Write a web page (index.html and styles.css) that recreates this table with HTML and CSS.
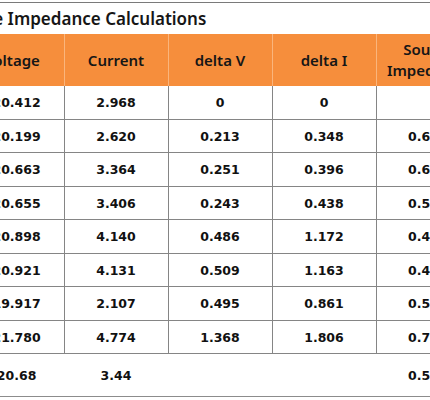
FILE: index.html
```html
<!DOCTYPE html>
<html lang="en">
<head>
  <meta charset="UTF-8">
  <meta name="viewport" content="width=device-width, initial-scale=1.0">
  <title>Source Impedance Calculations</title>
  <link rel="stylesheet" href="styles.css">
</head>
<body>
  <div class="panel">
    <h1 class="panel-title">Source Impedance Calculations</h1>

    <table class="calc">
      <thead>
        <tr>
          <th>Voltage</th>
          <th>Current</th>
          <th>delta V</th>
          <th>delta I</th>
          <th>Source<br>Impedance</th>
        </tr>
      </thead>
      <tbody>
        <tr><td>120.412</td><td>2.968</td><td>0</td><td>0</td><td></td></tr>
        <tr><td>120.199</td><td>2.620</td><td>0.213</td><td>0.348</td><td>0.612</td></tr>
        <tr><td>120.663</td><td>3.364</td><td>0.251</td><td>0.396</td><td>0.634</td></tr>
        <tr><td>120.655</td><td>3.406</td><td>0.243</td><td>0.438</td><td>0.555</td></tr>
        <tr><td>120.898</td><td>4.140</td><td>0.486</td><td>1.172</td><td>0.415</td></tr>
        <tr><td>120.921</td><td>4.131</td><td>0.509</td><td>1.163</td><td>0.438</td></tr>
        <tr><td>119.917</td><td>2.107</td><td>0.495</td><td>0.861</td><td>0.575</td></tr>
        <tr><td>121.780</td><td>4.774</td><td>1.368</td><td>1.806</td><td>0.757</td></tr>
      </tbody>
      <tfoot>
        <tr><td>120.68</td><td>3.44</td><td></td><td></td><td>0.569</td></tr>
      </tfoot>
    </table>
  </div>
</body>
</html>
```

FILE: styles.css
```css
:root {
  --laranja: #f68e3c;
  --laranja-claro: #fab57c;
  --linha: #858585;
  --texto: #111;
}

body {
  margin: 0;
  background: #fff;
  font-family: "Noto Sans", "DejaVu Sans", sans-serif;
  color: var(--texto);
  overflow: hidden;
}

.panel {
  margin: 2px 0 0 -53px;
  width: 620px;
  border-top: 1px solid #7a7a7a;
}

.panel-title {
  margin: 0;
  font-size: 17px;
  font-weight: 600;
  line-height: 31px;
  color: #161616;
}

.calc {
  margin-left: 13px;
  border-collapse: collapse;
  table-layout: fixed;
  width: 515px;
}

.calc th,
.calc td {
  width: 103px;
  padding: 0;
  text-align: center;
}

.calc th {
  height: 52px;
  background: var(--laranja);
  font-size: 15px;
  font-weight: 600;
  line-height: 21px;
  color: #161616;
  border-left: 1px solid var(--laranja-claro);
}

.calc th:first-child {
  border-left: none;
}

.calc tbody td,
.calc tfoot td {
  font-family: "DejaVu Sans", sans-serif;
  font-size: 12.5px;
  font-weight: bold;
}

.calc tbody td {
  height: 33px;
  border: 1px solid var(--linha);
  border-top: none;
}

.calc tbody tr:nth-child(even) td {
  height: 32px;
}

.calc tfoot td {
  height: 42px;
  border-bottom: 1px solid #8c8c8c;
}
```
